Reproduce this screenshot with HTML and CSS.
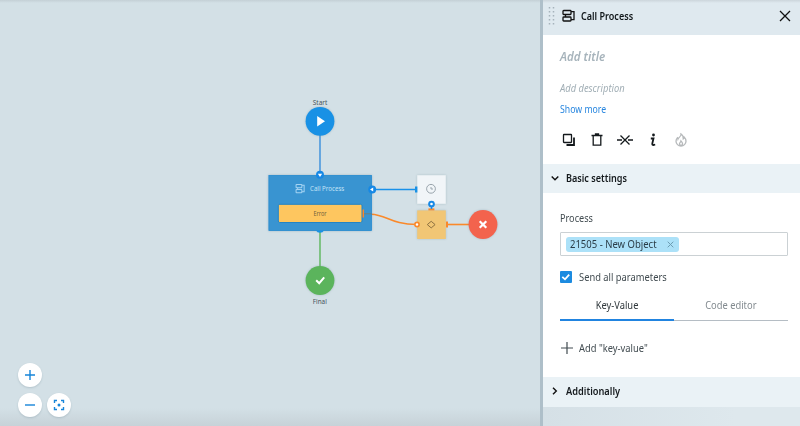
FILE: index.html
```
<!DOCTYPE html>
<html lang="en">
<head>
<meta charset="utf-8">
<title>Call Process</title>
<link rel="stylesheet" href="styles.css">
</head>
<body>
<div class="app">
  <main class="canvas">
    <svg class="diagram" width="540" height="426" viewBox="0 0 540 426">
      <g class="wire">
        <path class="blue-soft" d="M320 134V172"/>
        <path class="green" d="M320 231V268"/>
        <path class="blue" d="M372 189.500H417"/>
        <path class="orange" d="M371 214.200C387 214.800 391 224.500 417 224.500"/>
        <path class="orange" d="M446 224.500H470"/>
      </g>
      <circle class="node fill-blue" cx="320" cy="121.300" r="14.400"/>
      <path class="fill-white" d="M317.200 116V126.600L325 121.300Z"/>
      <text class="caption" x="312.800" y="104.800" textLength="14.400" lengthAdjust="spacingAndGlyphs">Start</text>

      <rect class="process" x="268.900" y="175.500" width="102.500" height="55"/>
      <g class="process-icon" transform="translate(295.500 183.700) scale(.72)">
        <rect x=".8" y="1" width="8" height="4.500" rx=".7"/><rect x=".8" y="8" width="8" height="4.500" rx=".7"/><path d="M3 5.500V8M8.800 2.200H12V11.200H8.800"/>
      </g>
      <text class="process-title" x="310" y="191.400" textLength="34.300" lengthAdjust="spacingAndGlyphs">Call Process</text>
      <path class="orange-edge" d="M362.800 209.500V217.500"/>
      <rect class="error" x="278.300" y="204.300" width="83.700" height="18.200" rx="1.500"/>
      <text class="error-title" x="313.500" y="215.700" textLength="13" lengthAdjust="spacingAndGlyphs">Error</text>
      <path class="muted-edge" d="M364 213.800H371.500"/>
      <circle class="port" cx="320" cy="174.800" r="3.200"/><path class="fill-white" d="M317.900 173.800H322.100L320 177Z"/>
      <circle class="port" cx="372.200" cy="189.500" r="3.200"/><path class="fill-white" d="M373.200 187.400V191.600L370 189.500Z"/>
      <path class="fill-blue" d="M316 230.400H324Q323 232.800 320 232.800T316 230.400Z"/>

      <circle class="node fill-green" cx="320" cy="280.500" r="14.400"/>
      <path class="check" d="M316.200 280.200L319.200 283.200L324.200 277.300"/>
      <text class="caption" x="312.800" y="303.700" textLength="14" lengthAdjust="spacingAndGlyphs">Final</text>

      <rect class="node timer" x="417.200" y="175.200" width="28.600" height="28.600"/>
      <circle class="timer-icon" cx="431" cy="188.800" r="4.400"/><path class="timer-icon" d="M431 187V189H433"/>
      <rect class="fill-blue" x="415" y="186.500" width="2.400" height="6"/>
      <rect class="node condition" x="417.200" y="210.400" width="28.600" height="28.600"/>
      <path class="condition-icon" d="M427.300 224.600L431.200 221.300L435.100 224.600L431.200 227.900Z"/>
      <rect class="fill-orange" x="428.400" y="208.400" width="6" height="2"/>
      <path class="blue-stem" d="M431.500 205V209"/>
      <circle class="port" cx="431.500" cy="204" r="2.600"/><circle class="fill-white" cx="431.500" cy="204" r="1.300"/>
      <circle class="port-orange" cx="417" cy="224.500" r="2.100"/>
      <rect class="fill-orange" x="446" y="221.500" width="2" height="6"/>
      <circle class="node fill-red" cx="483" cy="224.500" r="14.400"/>
      <path class="cross" d="M479.700 221.200L486.300 227.800M486.300 221.200L479.700 227.800"/>
    </svg>
    <div class="zoom-controls">
      <div class="round-button"><svg width="14" height="14"><path d="M7 2V12M2 7H12"/></svg></div>
      <div class="zoom-row">
        <div class="round-button"><svg width="14" height="14"><path d="M2 7H12"/></svg></div>
        <div class="round-button"><svg width="14" height="14"><path d="M2.500 5V2.500H5M9 2.500H11.500V5M11.500 9V11.500H9M5 11.500H2.500V9"/><circle class="dot" cx="7" cy="7" r="1.500"/></svg></div>
      </div>
    </div>
  </main>
  <aside class="panel">
    <header class="panel-header">
      <svg class="grip" width="7" height="18"><path d="M1.500 0V18M5.500 0V18"/></svg>
      <svg class="header-icon" width="14" height="14"><rect x="1" y="1.500" width="8" height="4" rx=".7"/><rect x="1" y="8" width="8" height="4" rx=".7"/><path d="M3.500 5.500V8M9 2.700H12V10.700H9"/></svg>
      <span class="text panel-title">Call Process</span>
      <svg class="close" width="12" height="12"><path d="M1 1L11 11M11 1L1 11"/></svg>
    </header>
    <section class="details">
      <div class="text title-input">Add title</div>
      <div class="text description-input">Add description</div>
      <a class="text show-more">Show more</a>
      <div class="tools">
        <svg width="16" height="16"><rect x="2.500" y="2.500" width="8" height="8" rx=".5"/><path class="thick" d="M13 5.500V13H5.500"/></svg>
        <svg width="16" height="16"><path d="M2.500 3.500H13.500M6.500 3V2H9.500V3M4.200 4V13.200H11.800V4"/></svg>
        <svg width="16" height="16"><path d="M3.500 3.500L12.500 12.500M12.500 3.500L3.500 12.500M0 8H5M11 8H16"/></svg>
        <svg width="16" height="16"><path class="thick" d="M5.800 6.500H8.500L7.300 11.500Q7 13 8.500 13L10.200 12.500"/><circle class="dot" cx="8.500" cy="3" r="1.400"/></svg>
        <svg class="flame" width="16" height="16"><path d="M8 2C8.500 4.500 5.800 5 5 7Q4.800 5.900 4.500 5.700Q3 7.500 3 9.200A5 4.800 0 0 0 13 9.200Q13 7 11.300 5.300Q11.300 6.500 10.300 7Q10.500 3.500 8 2ZM8 9C8 10 6.400 10.500 6.500 12Q6.800 13.500 8 13.500T9.600 12Q9.500 10.500 8 9Z"/></svg>
      </div>
    </section>
    <div class="section-bar basic"><svg width="8" height="8"><path d="M.7 2.500L4 5.800L7.300 2.500"/></svg><span class="text">Basic settings</span></div>
    <section class="settings">
      <div class="text process-label">Process</div>
      <div class="field"><div class="chip"><span class="text">21505 - New Object</span><svg width="7" height="7"><path d="M.7 .7L6.300 6.300M6.300 .7L.7 6.300"/></svg></div></div>
      <div class="check-row"><span class="checkbox"><svg width="11" height="11"><path d="M2.300 5.800L5 8.300L9.200 3.600"/></svg></span><span class="text send-label">Send all parameters</span></div>
      <div class="tabs"><div class="tab active"><span class="text key-tab">Key-Value</span></div><div class="tab"><span class="text code-tab">Code editor</span></div></div>
      <div class="add-row"><svg width="12" height="12"><path d="M6 0V12M0 6H12"/></svg><span class="text add-label">Add "key-value"</span></div>
    </section>
    <div class="section-bar additional"><svg width="8" height="8"><path d="M2 .7L5.300 4L2 7.300"/></svg><span class="text">Additionally</span></div>
    <footer class="panel-footer"></footer>
  </aside>
</div>
</body>
</html>
```
FILE: styles.css
```
* { box-sizing: border-box; }
body { margin: 0; font-family: "Noto Sans", sans-serif; font-size: 10.5px; color: #414b50; }
svg { display: block; fill: none; flex: none; }
.app { display: flex; width: 800px; height: 426px; overflow: hidden; background: #d3e0e6; }
.canvas { position: relative; width: 540px; background: linear-gradient(#c4d0d6 0, #d3e0e6 3px, #d3e0e6 408px, #c7d2d8 426px); }
.fill-blue { fill: #1991e5; }
.fill-green { fill: #5bb45c; }
.fill-orange { fill: #fa892a; }
.fill-red { fill: #f3634d; }
.fill-white { fill: #fff; }
.node { filter: drop-shadow(0 .5px 1px #6f8b9966); }
.wire path { stroke-width: 1.6; }
.wire .blue-soft { stroke: #4c98dd; }
.wire .green { stroke: #6abb6c; }
.wire .blue { stroke: #1991e9; }
.wire .orange { stroke: #fa892a; }
.caption { font-size: 6.500px; fill: #46535a; }
.process { fill: #3994d1; stroke: #238bd2; stroke-width: .8; filter: drop-shadow(0 .5px 1px #587b9066); }
.process-icon { stroke: #a4d3f2; stroke-width: 1.4; }
.process-title { font-size: 7px; fill: #c3e3f7; }
.error { fill: #fec65f; stroke: #2384c4; stroke-width: 1; }
.error-title { font-size: 6.300px; fill: #72603c; }
.orange-edge { stroke: #fa892a; stroke-width: 2.400; }
.muted-edge { stroke: #6f7f7c; stroke-width: 1; }
.port { fill: #1688e5; stroke: #1688e5; stroke-width: 1.500; }
.check { stroke: #fff; stroke-width: 2; }
.cross { stroke: #fff; stroke-width: 2.200; }
.timer { fill: #f1f5f8; }
.timer-icon { stroke: #9aa5ad; stroke-width: 1; }
.condition { fill: #f1c675; }
.condition-icon { stroke: #8d7140; stroke-width: 1; }
.blue-stem { stroke: #1688e5; stroke-width: 1.500; }
.port-orange { fill: #fff; stroke: #fa892a; stroke-width: 1.600; }
.zoom-controls { position: absolute; left: 17.5px; bottom: 9.5px; display: grid; gap: 5.5px; }
.zoom-row { display: flex; gap: 5.500px; }
.round-button { width: 24px; height: 24px; border-radius: 50%; background: #fff; display: grid; place-items: center; box-shadow: 0 1px 2px #758c9a55; }
.round-button svg { stroke: #1685d9; stroke-width: 1.400; }
.round-button .dot { fill: #1685d9; stroke: none; }
.panel { width: 260px; border-left: 3px solid #aebfc9; background: #fff; display: flex; flex-direction: column; }
.text { display: inline-block; white-space: nowrap; line-height: 14px; transform: scaleX(.89); transform-origin: left; }
.panel-header { height: 35px; padding: 0 9px 3px 5px; display: flex; align-items: center; background: linear-gradient(#ccd5db 0, #dfe9ef 3px); }
.grip { stroke: #a6b3bb; stroke-width: 1.500; stroke-dasharray: 1.500 2.500; }
.header-icon { margin-left: 7px; stroke: #111; stroke-width: 1.300; }
.panel-title { margin-left: 5px; font-weight: 600; color: #101619; transform: scaleX(.86); }
.close { margin-left: auto; stroke: #111; stroke-width: 1.300; }
.details { height: 129px; padding: 12px 0 0 17px; display: flex; flex-direction: column; align-items: flex-start; }
.title-input { font-size: 13px; line-height: 18px; font-weight: 600; font-style: italic; color: #a6b3bb; }
.description-input { margin-top: 16px; font-style: italic; color: #a2afb6; }
.show-more { margin-top: 7px; color: #2886df; transform: scaleX(.83); }
.tools { display: flex; gap: 12px; margin: 16px 0 0 1px; stroke: #14191c; stroke-width: 1.300; }
.tools .thick { stroke-width: 1.800; }
.tools .dot { fill: #14191c; stroke: none; }
.tools .flame { stroke: #b6b9bb; }
.section-bar { flex: none; height: 29px; padding: 0 0 2px 8px; display: flex; align-items: center; gap: 7px; background: #eaf2f6; font-weight: 600; color: #14191c; }
.section-bar .text { transform: scaleX(.865); }
.section-bar svg { stroke: #111; stroke-width: 1.400; }
.settings { height: 184px; padding: 18px 12px 0 17px; display: flex; flex-direction: column; align-items: stretch; }
.process-label { transform: scaleX(.87); }
.field { height: 24px; margin-top: 7px; border: 1px solid #cbd1d4; border-radius: 1px; padding: 4px 5px; }
.chip { width: 113px; height: 15px; border-radius: 3px; background: #ace1f8; display: flex; align-items: center; justify-content: space-between; padding: 0 5px 0 4px; color: #2a3c46; }
.chip .text { margin-top: -1px; transform: scaleX(.905); }
.chip svg { stroke: #6d9db3; stroke-width: 1; }
.check-row { display: flex; align-items: center; height: 14px; margin-top: 14px; gap: 7px; }
.checkbox { width: 12px; height: 12px; border-radius: 1px; background: #1c8be0; }
.checkbox svg { stroke: #fff; stroke-width: 1.800; }
.tabs { display: flex; height: 30px; margin-top: 7px; }
.tab { flex: 1; border-bottom: 1px solid #b5bdc4; display: flex; justify-content: center; padding-top: 7px; color: #828a8f; }
.tab.active { border-bottom: 2px solid #2184e0; color: #30383c; }
.tab .text { transform-origin: center; }
.add-row { display: flex; align-items: center; margin-top: 20px; gap: 6px; padding-left: 1px; }
.add-row svg { stroke: #414b50; stroke-width: 1.200; }
.additional { height: 30px; }
.additional .text { transform: scaleX(.88); }
.panel-footer { flex: 1; background: linear-gradient(90deg, #d5e0e6 0, #dee8ed 75%); }
```
